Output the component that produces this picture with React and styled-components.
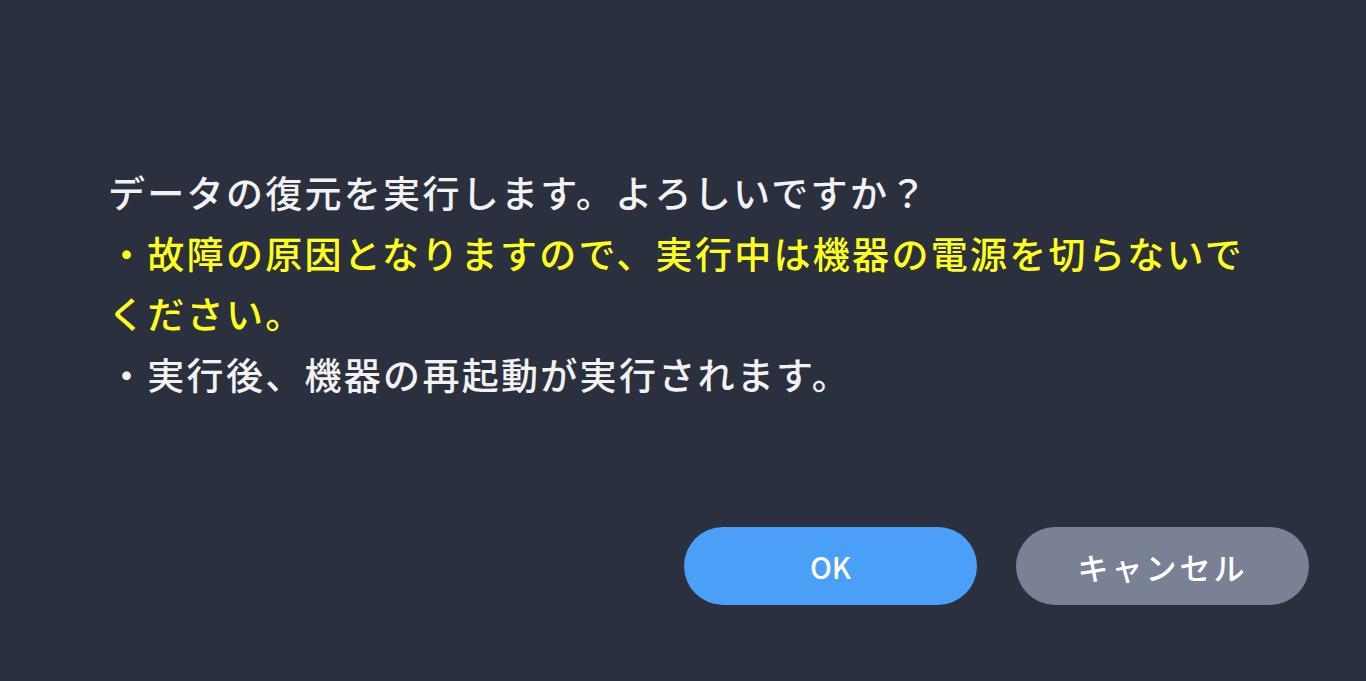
import React from 'react';
import styled, { createGlobalStyle } from 'styled-components';

const GlobalStyle = createGlobalStyle`
  html, body {
    margin: 0;
    padding: 0;
    background: #2a303e;
  }
  body {
    font-family: "Noto Sans CJK JP", "Noto Sans", sans-serif;
  }
`;

const Dialog = styled.div`
  width: 1366px;
  height: 681px;
  box-sizing: border-box;
  display: flex;
  flex-direction: column;
  background: #2a303e;
  padding: 162px 57px 0 108px;
`;

const Message = styled.div`
  max-width: 1160px;
  font-size: 37px;
  font-weight: 500;
  letter-spacing: 2.3px;
  line-height: 60.5px;
  color: #f2f2f2;
`;

const Line = styled.div`
  color: ${(p) => (p.$warn ? '#ffff1a' : '#f2f2f2')};
`;

const Footer = styled.div`
  display: flex;
  justify-content: flex-end;
  gap: 39px;
  margin-top: 123px;
`;

const Button = styled.button`
  width: 293px;
  height: 78px;
  border: none;
  border-radius: 39px;
  background: ${(p) => (p.$primary ? '#4aa0f7' : '#7a8194')};
  color: #ffffff;
  font-family: "Noto Sans CJK JP", "Noto Sans", sans-serif;
  font-size: ${(p) => (p.$primary ? '29px' : '31px')};
  font-weight: 500;
  letter-spacing: ${(p) => (p.$primary ? '0' : '3px')};
  padding: 0;
  cursor: pointer;
`;

const App = () => {
  return (
    <>
      <GlobalStyle />
      <Dialog>
        <Message>
          <Line>データの復元を実行します。よろしいですか？</Line>
          <Line $warn>・故障の原因となりますので、実行中は機器の電源を切らないでください。</Line>
          <Line>・実行後、機器の再起動が実行されます。</Line>
        </Message>
        <Footer>
          <Button $primary>OK</Button>
          <Button>キャンセル</Button>
        </Footer>
      </Dialog>
    </>
  );
};

export default App;
